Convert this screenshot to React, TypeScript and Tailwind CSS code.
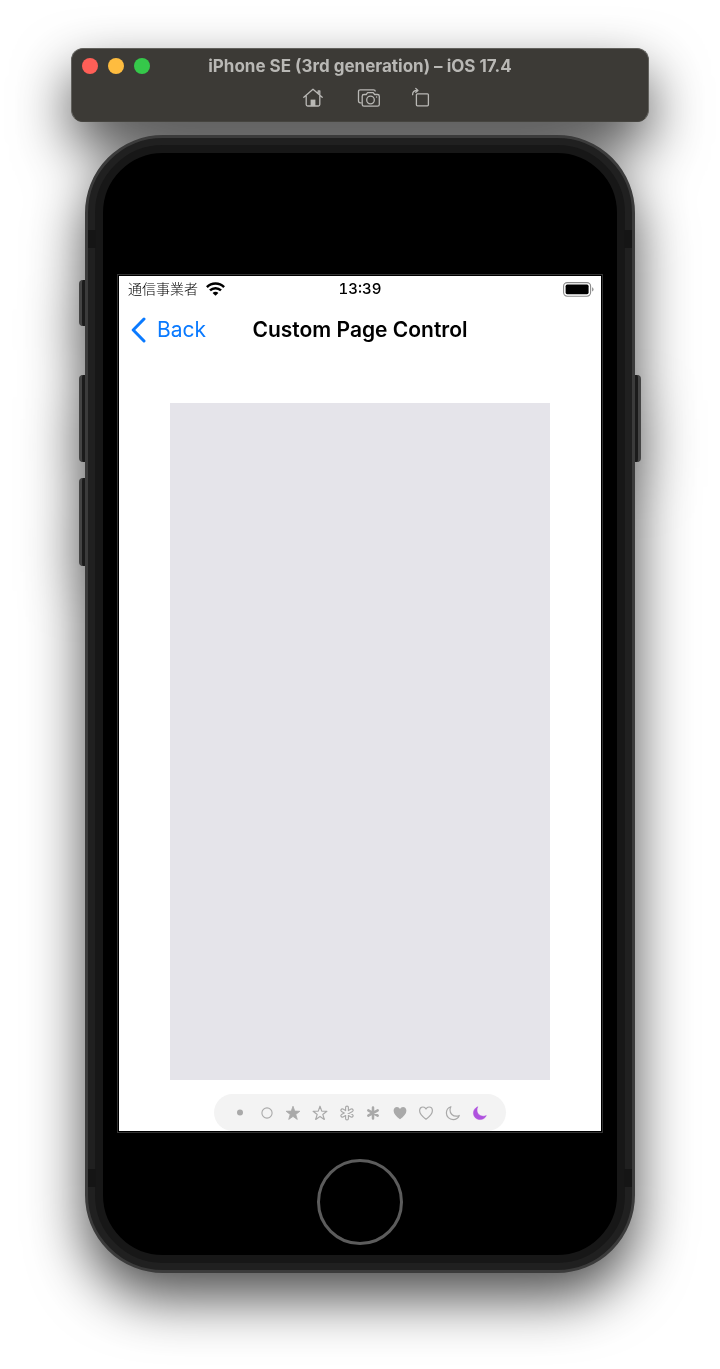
import { useState, type ReactNode } from "react";

const starPoints = "8,1.2 9.75,6.1 14.9,6.25 10.8,9.4 12.3,14.4 8,11.45 3.7,14.4 5.2,9.4 1.1,6.25 6.25,6.1";
const heartPath = "M8 14.2C4.2 11.4 1.6 8.8 1.6 5.7C1.6 3.5 3.1 2 5 2C6.3 2 7.4 2.8 8 4C8.6 2.8 9.7 2 11 2C12.9 2 14.4 3.5 14.4 5.7C14.4 8.8 11.8 11.4 8 14.2Z";
const moonPath = "M5.9 1.7C5.3 2.7 5 3.8 5 5C5 8.7 7.8 11.2 11.4 11.2C12.5 11.2 13.5 11 14.3 10.5C13.3 13 10.9 14.6 8.1 14.6C4.3 14.6 1.4 11.7 1.4 8C1.4 5.1 3.2 2.6 5.9 1.7Z";
const asteriskArms = "M8 2.6V13.4M3.3 5.3L12.7 10.7M3.3 10.7L12.7 5.3";

const indicators: { label: string; art: ReactNode }[] = [
  { label: "Dot", art: <circle cx="8" cy="7.6" r="3" fill="currentColor" /> },
  { label: "Circle", art: <circle cx="8" cy="8" r="5.1" fill="none" stroke="currentColor" strokeWidth="1.1" /> },
  { label: "Star, filled", art: <polygon points={starPoints} fill="currentColor" stroke="currentColor" strokeWidth="0.8" strokeLinejoin="round" /> },
  { label: "Star", art: <polygon points={starPoints} fill="none" stroke="currentColor" strokeWidth="1.2" strokeLinejoin="round" /> },
  {
    label: "Asterisk",
    art: (
      <g fill="none" strokeLinecap="round">
        <path d={asteriskArms} stroke="currentColor" strokeWidth="4" />
        <path d={asteriskArms} stroke="#f3f3f3" strokeWidth="1.7" />
      </g>
    ),
  },
  { label: "Asterisk, filled", art: <path d={asteriskArms} fill="none" stroke="currentColor" strokeWidth="2.5" strokeLinecap="round" /> },
  { label: "Heart, filled", art: <path d={heartPath} fill="currentColor" /> },
  { label: "Heart", art: <path d={heartPath} fill="none" stroke="currentColor" strokeWidth="1.2" strokeLinejoin="round" /> },
  { label: "Moon", art: <path d={moonPath} fill="none" stroke="currentColor" strokeWidth="1.2" strokeLinejoin="round" /> },
  { label: "Moon, filled", art: <path d={moonPath} fill="currentColor" stroke="currentColor" strokeWidth="0.5" strokeLinejoin="round" /> },
];

function Toolbar() {
  return (
    <header className="rounded-xl border border-[#62615d] border-b-[#45443f] bg-[#3c3a36] pt-[3px] pb-[7px] text-[#b9b8b5]">
      <div className="grid grid-cols-[1fr_auto_1fr] items-center">
        <div className="flex gap-[10px] pl-[10px]">
          <button aria-label="Close" className="size-4 rounded-full bg-[#ff5f57]" />
          <button aria-label="Minimize" className="size-4 rounded-full bg-[#febc3f]" />
          <button aria-label="Zoom" className="size-4 rounded-full bg-[#35c84a]" />
        </div>
        <h1 className="text-[17px] leading-7 font-bold whitespace-nowrap">iPhone SE (3rd generation) – iOS 17.4</h1>
      </div>
      <div className="flex justify-center gap-7 pt-[6px] pb-1 pl-[14px]">
        <button aria-label="Home" className="mr-1">
          <svg viewBox="0 0 24 24" className="size-6" fill="none" stroke="currentColor" strokeWidth="1.3" strokeLinejoin="round" strokeLinecap="round">
            <path d="M2.8 11.3L12 3.3L21.2 11.3M5.2 10V18.5Q5.2 20 6.7 20H17.3Q18.8 20 18.8 18.5V10M17.2 7.5V4.8H18.8V9" />
            <path d="M9.6 20V13.6H14.4V20Z" fill="currentColor" stroke="none" />
          </svg>
        </button>
        <button aria-label="Screenshot">
          <svg viewBox="0 0 24 24" className="size-6" fill="none" stroke="currentColor" strokeWidth="1.3" strokeLinejoin="round">
            <path d="M4.6 16.8H3.3Q1.5 16.8 1.5 15V5.6Q1.5 3.8 3.3 3.8H16.5Q18.3 3.8 18.3 5.5" />
            <path d="M7 8.5H9.2L10.6 6.7H16.2L17.6 8.5H20.5Q22.3 8.5 22.3 10.3V18.4Q22.3 20.2 20.5 20.2H7Q5.2 20.2 5.2 18.4V10.3Q5.2 8.5 7 8.5Z" />
            <circle cx="13.5" cy="14" r="3.8" />
            <circle cx="19.6" cy="11" r="0.7" fill="currentColor" stroke="none" />
          </svg>
        </button>
        <button aria-label="Rotate">
          <svg viewBox="0 0 24 24" className="size-6" fill="none" stroke="currentColor" strokeWidth="1.3" strokeLinejoin="round" strokeLinecap="round">
            <rect x="7.4" y="7.8" width="12" height="12" rx="1" />
            <path d="M3.6 8.7C3.6 5.9 4.9 4.4 8.2 4.4M6.8 2.5L9 4.4L6.8 6.3" />
          </svg>
        </button>
      </div>
    </header>
  );
}

function StatusBar() {
  return (
    <div className="grid h-[26px] grid-cols-[1fr_auto_1fr] items-center">
      <div className="flex items-center gap-2 pl-[9px]">
        <span className="pb-[2px] font-['Noto_Sans_CJK_JP',sans-serif] text-[14px] leading-5 font-light">通信事業者</span>
        <svg viewBox="0 0 19 14" className="h-[14px] w-[19px]" fill="none" stroke="#000" strokeWidth="2.5">
          <path d="M0.9 5.2C5.7 0.4 13.3 0.4 18.1 5.2" />
          <path d="M4 8.4C7.1 5.4 11.9 5.4 15 8.4" />
          <path d="M9.5 13.8L6.6 10.9C8.2 9.4 10.8 9.4 12.4 10.9Z" fill="#000" stroke="none" />
        </svg>
      </div>
      <span className="text-[15px] leading-5 font-medium tabular-nums">13:39</span>
      <svg viewBox="0 0 31 15" className="mr-[7px] h-[15px] w-[31px] justify-self-end">
        <rect x="0.6" y="0.6" width="27" height="13.6" rx="3.6" fill="none" stroke="#8a8a8a" strokeWidth="1.1" />
        <rect x="2.6" y="2.6" width="23" height="9.6" rx="1.6" fill="#000" />
        <path d="M29 5.2Q30.6 5.8 30.6 7.4Q30.6 9 29 9.6Z" fill="#999" />
      </svg>
    </div>
  );
}

function PageControl() {
  const [current, setCurrent] = useState(9);
  return (
    <div className="mx-auto mt-[14px] mb-px flex h-[37px] w-full max-w-[292px] items-center rounded-full bg-[#f3f3f3] px-[13px]">
      {indicators.map((item, i) => (
        <button
          key={item.label}
          aria-label={item.label}
          aria-current={i === current ? "page" : undefined}
          onClick={() => setCurrent(i)}
          className={i === current ? "flex flex-1 justify-center text-[#af52de]" : "flex flex-1 justify-center text-[#a9a9a9]"}
        >
          <svg viewBox="0 0 16 16" className="size-4">{item.art}</svg>
        </button>
      ))}
    </div>
  );
}

function Screen() {
  return (
    <main className="bg-white text-black outline outline-[#333] outline-offset-1">
      <StatusBar />
      <nav className="grid h-14 grid-cols-[1fr_auto_1fr] items-center">
        <a href="#back" className="flex items-center gap-[11px] pl-3 text-[21px] leading-7 text-[#0a7aff]">
          <svg viewBox="0 0 15 26" className="h-[26px] w-[15px]" fill="none" stroke="currentColor" strokeWidth="3" strokeLinecap="round" strokeLinejoin="round">
            <path d="M13 2L2.2 13L13 24" />
          </svg>
          Back
        </a>
        <h2 className="text-[21px] leading-7 font-semibold whitespace-nowrap">Custom Page Control</h2>
      </nav>
      <div className="px-[51px] pt-[45px]">
        <div className="aspect-[380/677] bg-[#e5e4ea]" />
      </div>
      <PageControl />
    </main>
  );
}

function Phone() {
  return (
    <div className="relative mx-[14px] mt-[13px]">
      <div className="absolute top-[145px] -left-[6px] h-[46px] w-4 rounded-[4px] border-l-3 border-[#444] bg-[#1b1b1b]" />
      <div className="absolute top-[240px] -left-[6px] h-[87px] w-4 rounded-[4px] border-l-3 border-[#444] bg-[#1b1b1b]" />
      <div className="absolute top-[343px] -left-[6px] h-[88px] w-4 rounded-[4px] border-l-3 border-[#444] bg-[#1b1b1b]" />
      <div className="absolute top-[240px] -right-[6px] h-[87px] w-4 rounded-[4px] border-r-3 border-[#444] bg-[#1b1b1b]" />
      <div className="relative rounded-[78px] border-3 border-[#3b3b3b] bg-[#202020] p-[7px]">
        <div className="absolute top-[92px] left-0 h-[18px] w-2 bg-[#151515]" />
        <div className="absolute top-[92px] right-0 h-[18px] w-2 bg-[#151515]" />
        <div className="absolute bottom-[83px] left-0 h-[18px] w-2 bg-[#151515]" />
        <div className="absolute right-0 bottom-[83px] h-[18px] w-2 bg-[#151515]" />
        <div className="rounded-[68px] border-8 border-[#171717] bg-black px-4 pt-[123px]">
          <Screen />
          <div className="flex h-[123px] items-center justify-center pt-4">
            <button aria-label="Home button" className="size-[86px] rounded-full border-3 border-[#5c5c5c]" />
          </div>
        </div>
      </div>
    </div>
  );
}

export default function App() {
  return (
    <div className="overflow-hidden bg-white px-4 pt-12 pb-24 font-[Inter,sans-serif]">
      <div className="mx-auto max-w-[578px] drop-shadow-[0_25px_28px_rgba(0,0,0,0.7)]">
        <Toolbar />
        <Phone />
      </div>
    </div>
  );
}
